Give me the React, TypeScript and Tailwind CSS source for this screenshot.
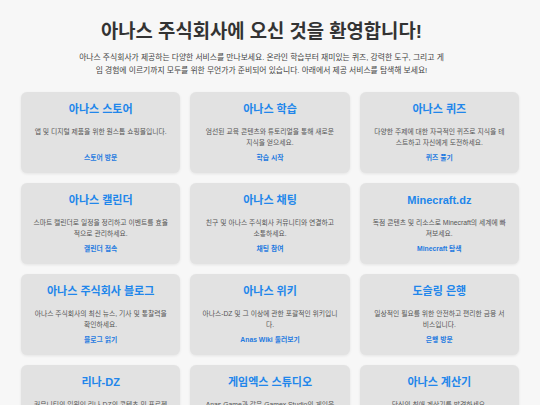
import React from 'react'

interface Service {
  title: string
  desc: string
  link: string
}

const services: Service[] = [
  { title: '아나스 스토어', desc: '앱 및 디지털 제품을 위한 원스톱 쇼핑몰입니다.', link: '스토어 방문' },
  { title: '아나스 학습', desc: '엄선된 교육 콘텐츠와 튜토리얼을 통해 새로운 지식을 얻으세요.', link: '학습 시작' },
  { title: '아나스 퀴즈', desc: '다양한 주제에 대한 자극적인 퀴즈로 지식을 테스트하고 자신에게 도전하세요.', link: '퀴즈 풀기' },
  { title: '아나스 캘린더', desc: '스마트 캘린더로 일정을 정리하고 이벤트를 효율적으로 관리하세요.', link: '캘린더 접속' },
  { title: '아나스 채팅', desc: '친구 및 아나스 주식회사 커뮤니티와 연결하고 소통하세요.', link: '채팅 참여' },
  { title: 'Minecraft.dz', desc: '독점 콘텐츠 및 리소스로 Minecraft의 세계에 빠져보세요.', link: 'Minecraft 탐색' },
  { title: '아나스 주식회사 블로그', desc: '아나스 주식회사의 최신 뉴스, 기사 및 통찰력을 확인하세요.', link: '블로그 읽기' },
  { title: '아나스 위키', desc: '아나스-DZ 및 그 이상에 관한 포괄적인 위키입니다.', link: 'Anas Wiki 둘러보기' },
  { title: '도슬링 은행', desc: '일상적인 필요를 위한 안전하고 편리한 금융 서비스입니다.', link: '은행 방문' },
  { title: '리나-DZ', desc: '커뮤니티의 일원인 리나-DZ의 콘텐츠 및 프로젝트를 확인하세요.', link: '리나-DZ 방문' },
  { title: '게임엑스 스튜디오', desc: 'Anas Game과 같은 Gamex Studio의 게임을 확인하세요.', link: '스튜디오 방문' },
  { title: '아나스 계산기', desc: '당신의 최애 계산기를 발견하세요.', link: '계산기 사용' },
]

function ServiceCard({ title, desc, link }: Service) {
  return (
    <div className="flex flex-col rounded-[6px] bg-[#e2e2e2] px-[12px] pt-[9px] pb-[10.5px] text-center shadow-[0_1px_3px_rgba(0,0,0,0.08)]">
      <h2 className="text-[11px] leading-[16px] font-bold text-[#2186eb]">{title}</h2>
      <p className="mt-[8.5px] text-[6.8px] leading-[11px] text-[#555]">{desc}</p>
      <a href="#" className="mt-auto pt-[4px] text-[6.8px] leading-[11px] font-bold text-[#1f7ae0]">
        {link}
      </a>
    </div>
  )
}

export default function App() {
  return (
    <div className="min-h-screen bg-[#f7f7f7] pb-6 font-['Liberation_Sans','Noto_Sans_CJK_KR',sans-serif]">
      <header className="pt-[19px] pr-[17px] text-center">
        <h1 className="text-[18.8px] leading-[26px] font-bold text-[#333]">
          아나스 주식회사에 오신 것을 환영합니다!
        </h1>
        <p className="mx-auto mt-[5.5px] max-w-[367px] text-[7.8px] leading-[13px] text-[#444]">
          아나스 주식회사가 제공하는 다양한 서비스를 만나보세요. 온라인 학습부터 재미있는 퀴즈, 강력한 도구, 그리고 게임 경험에 이르기까지 모두를 위한 무언가가 준비되어 있습니다. 아래에서 제공 서비스를 탐색해 보세요!
        </p>
      </header>

      <main className="mx-auto mt-[15.5px] grid w-[498px] grid-cols-3 gap-[10px]">
        {services.map((s) => (
          <ServiceCard key={s.title} {...s} />
        ))}
      </main>
    </div>
  )
}
